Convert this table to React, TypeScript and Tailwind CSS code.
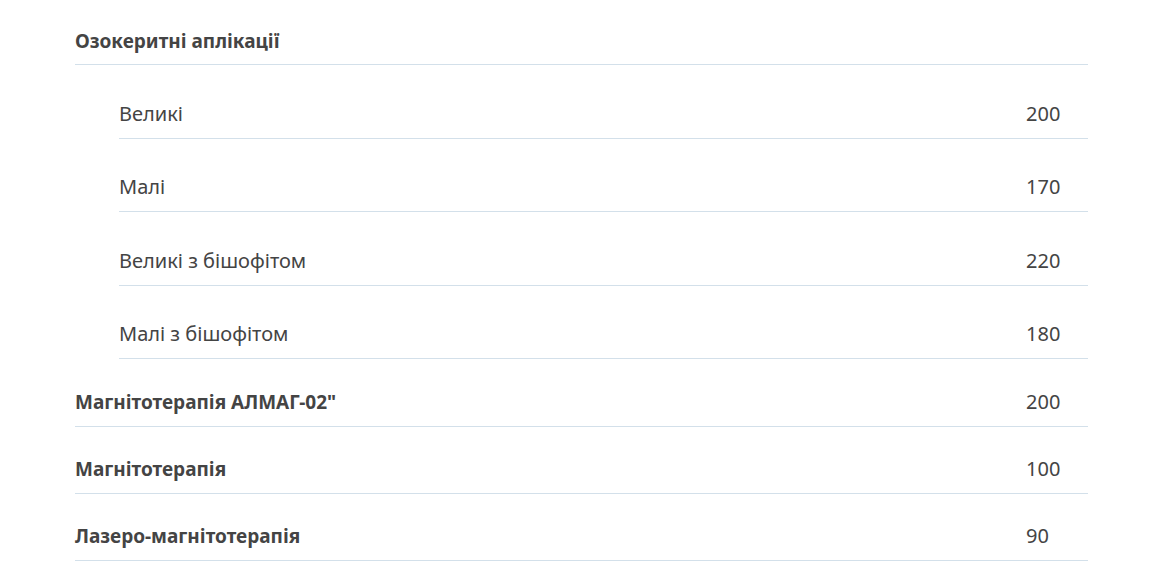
const subItems = [
  { name: 'Великі', price: '200' },
  { name: 'Малі', price: '170' },
  { name: 'Великі з бішофітом', price: '220' },
  { name: 'Малі з бішофітом', price: '180' },
];

const mainItems = [
  { name: 'Магнітотерапія АЛМАГ-02"', price: '200' },
  { name: 'Магнітотерапія', price: '100' },
  { name: 'Лазеро-магнітотерапія', price: '90' },
];

export default function App() {
  return (
    <div className="min-h-screen bg-white font-['Noto_Sans',sans-serif] text-[#444444]">
      <div className="ml-[75px] w-[1013px] pt-[27px]">
        <div className="border-b border-[#d3e0ea] pb-[9px]">
          <h3 className="text-[19px] font-bold leading-[28px]">Озокеритні аплікації</h3>
        </div>

        <ul className="ml-[44px]">
          {subItems.map((item) => (
            <li
              key={item.name}
              className="flex items-center border-b border-[#d3e0ea] pt-[35px] pb-[10px] text-[20px] leading-[28px] even:pt-[34px]"
            >
              <span className="flex-1">{item.name}</span>
              <span className="w-[62px]">{item.price}</span>
            </li>
          ))}
        </ul>

        <ul>
          {mainItems.map((item) => (
            <li
              key={item.name}
              className="flex items-center border-b border-[#d3e0ea] pt-[28px] pb-[10px] leading-[28px] first:pt-[29px]"
            >
              <span className="flex-1 text-[19px] font-bold">{item.name}</span>
              <span className="w-[62px] text-[20px]">{item.price}</span>
            </li>
          ))}
        </ul>
      </div>
    </div>
  );
}
